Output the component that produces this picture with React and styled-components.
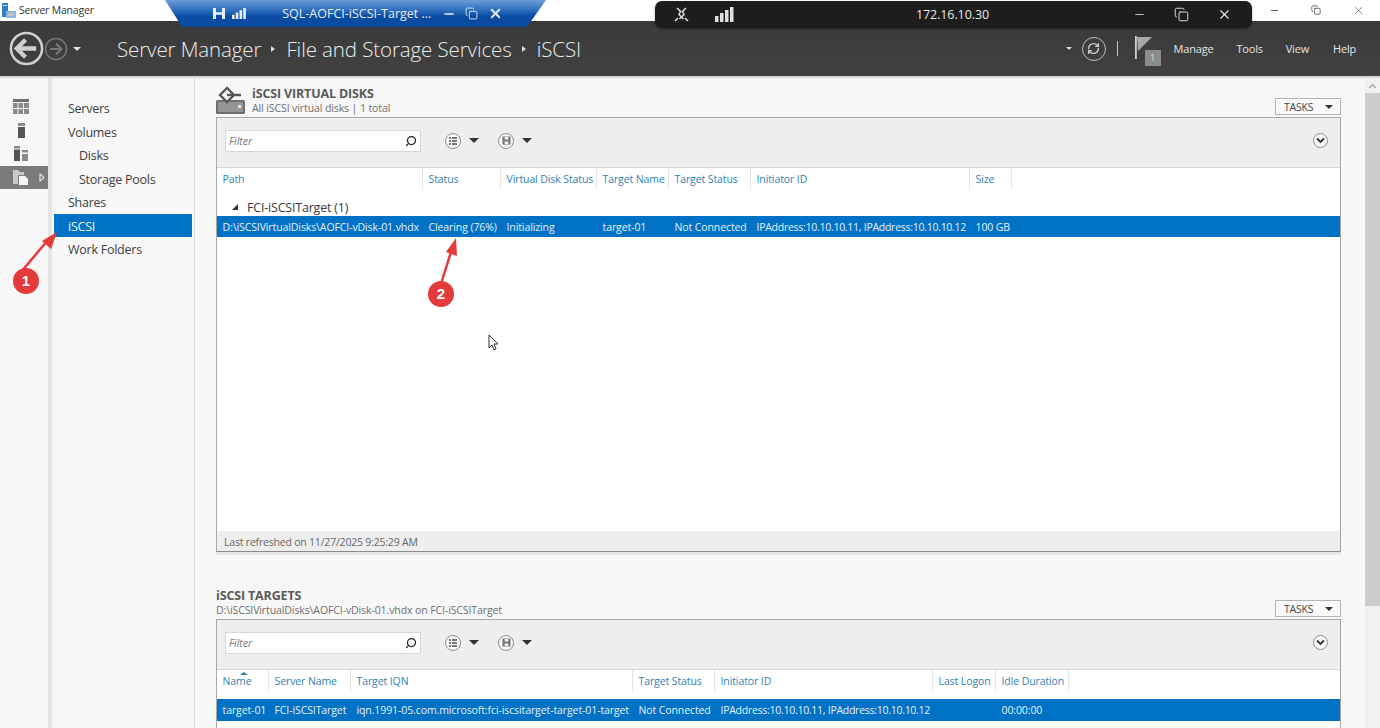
import React from 'react';
import styled, { createGlobalStyle } from 'styled-components';
import { Minus, X, Copy, Search, RefreshCw } from 'lucide-react';

const GlobalStyle = createGlobalStyle`
  html, body {
    margin: 0;
    padding: 0;
    height: 100%;
    overflow: hidden;
    background: #f7f7f7;
    font-family: "Open Sans", "Noto Sans", "Liberation Sans", sans-serif;
    color: #3a3a3a;
  }
  * { box-sizing: border-box; }
`;

const Page = styled.div`
  position: relative;
  width: 1380px;
  height: 728px;
  overflow: hidden;
  display: flex;
  flex-direction: column;
`;

const Spacer = styled.span`
  flex: none;
  width: ${p => p.$width}px;
`;

const TitleBar = styled.div`
  height: 21px;
  flex: none;
  background: #fff;
  display: flex;
  align-items: center;
  padding: 0 0 1px 2px;
  font-size: 10.5px;
  letter-spacing: -0.2px;
  color: #333;
`;

const TitleText = styled.span`
  margin-left: 3px;
  flex: 1;
`;

const WindowControls = styled.div`
  display: flex;
  align-items: center;
  gap: 31px;
  padding-right: 15px;
  color: #555;
`;

const Header = styled.header`
  height: 57px;
  flex: none;
  background: linear-gradient(#3a3a3a, #414141);
  border-bottom: 2px solid #d6d6d6;
  display: flex;
  align-items: center;
  color: #e6e6e6;
  padding-left: 9px;
`;

const NavButtons = styled.div`
  display: flex;
  align-items: center;
  width: 108px;
  flex: none;
`;

const Breadcrumb = styled.div`
  display: flex;
  align-items: center;
  flex: 1;
  font-size: 20.5px;
  font-weight: 300;
  letter-spacing: -0.1px;
  color: #ececec;
`;

const CrumbSep = styled.span`
  width: 0;
  height: 0;
  margin: 0 11px 0 10px;
  border-left: 4px solid #ddd;
  border-top: 3.5px solid transparent;
  border-bottom: 3.5px solid transparent;
`;

const HeaderRight = styled.div`
  display: flex;
  align-items: center;
  height: 100%;
`;

const Caret = styled.span`
  display: block;
  width: 0;
  height: 0;
  border-top: ${p => p.$size || 4}px solid ${p => p.$color || '#ddd'};
  border-left: ${p => p.$size || 4}px solid transparent;
  border-right: ${p => p.$size || 4}px solid transparent;
`;

const NavCaret = styled(Caret)`
  margin-left: 5px;
`;

const RefreshRing = styled.span`
  width: 24px;
  height: 24px;
  margin-left: 10px;
  border: 1.5px solid #bdbdbd;
  border-radius: 50%;
  display: flex;
  align-items: center;
  justify-content: center;
  color: #cfcfcf;
`;

const Divider = styled.span`
  width: 1px;
  height: 15px;
  margin: 0 17px 0 11px;
  background: #c8c8c8;
`;

const FlagBox = styled.div`
  position: relative;
  width: 26px;
  height: 30px;
  margin: 5px 13px 0 0;
`;

const FlagCount = styled.span`
  position: absolute;
  right: 0;
  bottom: 0;
  width: 16px;
  height: 16px;
  background: #8c8c8c;
  color: #ddd;
  font-size: 9px;
  text-align: center;
  line-height: 16px;
`;

const MenuItem = styled.span`
  font-size: 11px;
  letter-spacing: -0.2px;
  color: #e4e4e4;
  margin-right: ${p => p.$gap}px;
`;

const Body = styled.div`
  flex: 1;
  min-height: 0;
  display: flex;
`;

const Rail = styled.aside`
  width: 52px;
  flex: none;
  padding-top: 17px;
  background: #f7f7f7;
  border-right: 4px solid #e4e4e4;
`;

const RailItem = styled.div`
  height: 23.5px;
  display: flex;
  align-items: center;
  padding-left: 13px;
  background: ${p => (p.$active ? '#7b7b7b' : 'transparent')};
`;

const Nav = styled.nav`
  width: 143px;
  flex: none;
  padding: 18px 2px 0;
  background: #f7f7f7;
  border-right: 1px solid #dcdcdc;
`;

const NavItem = styled.div`
  height: 23.5px;
  line-height: 26px;
  font-size: 12.5px;
  letter-spacing: -0.25px;
  padding-left: ${p => (p.$sub ? 25 : 14)}px;
  background: ${p => (p.$active ? '#0072c6' : 'transparent')};
  color: ${p => (p.$active ? '#f2f8fc' : '#3f3f3f')};
`;

const Content = styled.main`
  flex: 1;
  min-width: 0;
  padding: 7px 24px 0 21px;
  background: #f7f7f7;
  overflow: hidden;
`;

const SectionHead = styled.div`
  height: 32px;
  display: flex;
  align-items: flex-start;
`;

const SectionIcon = styled.div`
  width: 36px;
  height: 32px;
  flex: none;
  padding-top: 1px;
`;

const SectionTitles = styled.div`
  flex: 1;
  min-width: 0;
`;

const SectionTitle = styled.div`
  font-size: 12.5px;
  font-weight: 700;
  line-height: 18px;
  letter-spacing: -0.15px;
  color: #5a5a5a;
`;

const SectionSub = styled.div`
  margin-top: -2px;
  font-size: 10.5px;
  line-height: 14px;
  letter-spacing: -0.1px;
  color: #6f6f6f;
`;

const TasksButton = styled.div`
  width: 66px;
  height: 17px;
  margin-top: 13px;
  flex: none;
  display: flex;
  align-items: center;
  justify-content: space-between;
  padding: 0 7px 0 8px;
  font-size: 10.5px;
  letter-spacing: -0.2px;
  color: #444;
  background: #f9f9f9;
  border: 1px solid #b4b4b4;
`;

const Panel = styled.section`
  height: ${p => p.$height}px;
  margin-bottom: ${p => p.$gap || 0}px;
  display: flex;
  flex-direction: column;
  background: #fff;
  border: 1px solid #a8a8a8;
  border-bottom-color: #8a8a8a;
  box-shadow: 0 3px 0 #e8e8e8;
`;

const Toolbar = styled.div`
  height: 50px;
  flex: none;
  display: flex;
  align-items: center;
  padding: 0 12px 4px 8px;
  background: #eeeeee;
  border-bottom: 1px solid #d8d8d8;
`;

const FilterBox = styled.div`
  width: 196px;
  height: 22px;
  display: flex;
  align-items: center;
  justify-content: space-between;
  padding: 0 3px;
  background: #fff;
  border: 1px solid #d6d6d6;
  font-size: 10.5px;
  font-style: italic;
  color: #777;
  margin-right: 24px;
`;

const FilterIcon = styled(Search)`
  transform: scaleX(-1);
`;

const ToolGroup = styled.div`
  display: flex;
  align-items: center;
  gap: 8px;
  margin-right: 19px;
`;

const RoundIcon = styled.span`
  width: 16px;
  height: 16px;
  border: 1px solid #8e8e8e;
  border-radius: 50%;
  background: #f8f8f8;
  display: flex;
  align-items: center;
  justify-content: center;
`;

const ExpandButton = styled(RoundIcon)`
  width: 15px;
  height: 15px;
  margin-left: auto;
`;

const Row = styled.div`
  display: grid;
  grid-template-columns: ${p => p.$columns};
  justify-content: start;
  height: ${p => p.$height}px;
  margin: ${p => p.$margin || '0'};
  align-items: center;
  font-size: 10.5px;
  letter-spacing: -0.1px;
  background: ${p => (p.$selected ? '#0072c6' : 'transparent')};
  color: ${p => (p.$selected ? '#e6f1f9' : '#2f7fb5')};
`;

const HeadCell = styled.div`
  position: relative;
  height: 100%;
  line-height: 22px;
  padding-left: 5.5px;
  white-space: nowrap;
  border-right: 1px solid #e6e6e6;
`;

const SortMark = styled.span`
  position: absolute;
  top: 2px;
  left: 23px;
  width: 0;
  height: 0;
  border-bottom: 3px solid #2f7fb5;
  border-left: 4px solid transparent;
  border-right: 4px solid transparent;
`;

const Cell = styled.div`
  padding-left: 5.5px;
  white-space: nowrap;
  letter-spacing: ${p => (p.$tight ? '-0.27px' : 'inherit')};
`;

const GroupRow = styled.div`
  height: 18px;
  margin-top: 8px;
  display: flex;
  align-items: center;
  padding-left: 15px;
  gap: 9px;
  font-size: 12.5px;
  letter-spacing: -0.2px;
  color: #3a3a3a;
`;

const GroupCaret = styled.span`
  width: 0;
  height: 0;
  border-bottom: 6px solid #333;
  border-left: 6px solid transparent;
`;

const Rows = styled.div`
  flex: 1;
  min-height: 0;
`;

const Footer = styled.div`
  height: 20px;
  flex: none;
  padding-left: 7px;
  line-height: 22px;
  font-size: 10.5px;
  letter-spacing: -0.2px;
  color: #666;
  background: #eeeeee;
`;

const Scrollbar = styled.div`
  width: 15px;
  flex: none;
  display: flex;
  flex-direction: column;
  background: #f1f1f1;
`;

const ScrollUp = styled.div`
  height: 15px;
  display: flex;
  align-items: center;
  justify-content: center;
  color: #a6a6a6;
`;

const ScrollThumb = styled.div`
  height: 513px;
  background: #cdcdcd;
`;

/* floating session bars, they sit over the title bar */
const BlueBar = styled.div`
  position: absolute;
  top: 0;
  left: 165px;
  width: 381px;
  height: 27px;
  display: flex;
  align-items: center;
  padding-left: 48px;
  clip-path: polygon(0 0, 100% 0, 95% 100%, 4.5% 100%);
  background: linear-gradient(#6c9bd8 0, #2a6bbb 40%, #0a4ca3 60%, #0b4a9e 100%);
  color: #e6eef8;
`;

const BlueTitle = styled.span`
  margin: 0 11px 0 36px;
  font-size: 12.5px;
  white-space: nowrap;
`;

const DarkBar = styled.div`
  position: absolute;
  top: 1px;
  left: 655px;
  width: 597px;
  height: 27px;
  display: flex;
  align-items: center;
  border-radius: 7px;
  background: #1d1d1d;
  color: #e8e8e8;
  box-shadow: 0 1px 2px rgba(0, 0, 0, 0.4);
`;

const DarkIp = styled.span`
  flex: 1;
  text-align: center;
  font-size: 12.5px;
  letter-spacing: -0.1px;
  padding-left: 38px;
`;

const DarkControls = styled.div`
  display: flex;
  align-items: center;
  gap: 28px;
  padding-right: 20px;
`;

const Annotation = styled.svg`
  position: absolute;
  top: 0;
  left: 0;
  width: 1380px;
  height: 728px;
  pointer-events: none;
`;

const Badge = styled.div`
  position: absolute;
  top: ${p => p.$y - 13}px;
  left: ${p => p.$x - 13}px;
  width: 26px;
  height: 26px;
  border-radius: 50%;
  background: #e53a3a;
  color: #fff;
  font-size: 15px;
  font-weight: 700;
  text-align: center;
  line-height: 26px;
  font-family: "Liberation Sans", sans-serif;
`;

const diskColumns = '206px 78px 96px 72px 82px 219px 42px';
const targetColumns = '52px 82px 282px 82px 218px 63px 73px';

const diskHead = ['Path', 'Status', 'Virtual Disk Status', 'Target Name', 'Target Status', 'Initiator ID', 'Size'];
const diskRow = [
  'D:\\iSCSIVirtualDisks\\AOFCI-vDisk-01.vhdx',
  'Clearing (76%)',
  'Initializing',
  'target-01',
  'Not Connected',
  'IPAddress:10.10.10.11, IPAddress:10.10.10.12',
  '100 GB',
];
const targetHead = ['Name', 'Server Name', 'Target IQN', 'Target Status', 'Initiator ID', 'Last Logon', 'Idle Duration'];
const targetRow = [
  'target-01',
  'FCI-iSCSITarget',
  'iqn.1991-05.com.microsoft:fci-iscsitarget-target-01-target',
  'Not Connected',
  'IPAddress:10.10.10.11, IPAddress:10.10.10.12',
  '',
  '00:00:00',
];

const BackIcon = ({ size, color, width = 2.6 }) => (
  <svg width={size} height={size} viewBox="0 0 36 36" fill="none" stroke={color} strokeWidth={width}>
    <circle cx="18" cy="18" r="16" />
    <path d="M28 18H9M17 9l-9 9 9 9" strokeWidth={width * 1.7} />
  </svg>
);

const ForwardIcon = () => (
  <svg width="24" height="24" viewBox="0 0 24 24" fill="none" stroke="#777" strokeWidth="1.5">
    <circle cx="12" cy="12" r="10.5" />
    <path d="M6 12h11M12 6.5l5.5 5.5-5.5 5.5" strokeWidth="2.2" />
  </svg>
);

const ServerLogo = () => (
  <svg width="14" height="17" viewBox="0 0 14 17">
    <rect x="0" y="1" width="6" height="14" fill="#2f7fc4" />
    <rect x="1" y="3" width="4" height="1" fill="#cfe3f5" />
    <rect x="4" y="9" width="10" height="7" fill="#8bb7dd" />
    <rect x="6" y="11" width="6" height="3" fill="#b9c4cc" />
  </svg>
);

const SignalIcon = ({ color, size = 1 }) => (
  <svg width={19 * size} height={15 * size} viewBox="0 0 19 15" fill={color}>
    <rect x="0" y="9" width="3.5" height="6" />
    <rect x="5" y="6" width="3.5" height="9" />
    <rect x="10" y="3" width="3.5" height="12" />
    <rect x="15" y="0" width="3.5" height="15" />
  </svg>
);

const PinIcon = ({ color }) => (
  <svg width="12" height="13" viewBox="0 0 12 13" fill="none" stroke={color}>
    <path d="M1.500 1v11M10.500 1v11" strokeWidth="3" />
    <path d="M2 6.500h8" strokeWidth="2.500" />
  </svg>
);

const StruckPin = () => (
  <svg width="17" height="17" viewBox="0 0 17 17" fill="none" stroke="#d8d8d8" strokeWidth="1.6">
    <path d="M4 2l3.500 3.500-1.500 3 4.500 4.500M13 2 9.500 5.500l1.500 3L6.500 13" />
    <path d="M2 15l3-3M15 15l-3-3" />
  </svg>
);

const FlagIcon = () => (
  <svg width="18" height="23" viewBox="0 0 18 23">
    <rect x="0" y="0" width="1.8" height="23" fill="#cfcfcf" />
    <path d="M2 1h15L3 15z" fill="#a8a8a8" />
  </svg>
);

const DashboardIcon = () => (
  <svg width="16" height="15" viewBox="0 0 16 15">
    <rect width="16" height="3" fill="#6f6f6f" />
    <path d="M0 4h4.500v5H0zM5.500 4H10v5H5.500zM11 4h5v5h-5zM0 10h4.500v5H0zM5.500 10H10v5H5.500zM11 10h5v5h-5z" fill="#8a8a8a" />
  </svg>
);

const ServerIcon = () => (
  <svg width="16" height="15" viewBox="0 0 16 15">
    <rect x="5" y="0" width="7" height="3" fill="#8a8a8a" />
    <rect x="5" y="4" width="7" height="11" fill="#555" />
  </svg>
);

const AllServersIcon = () => (
  <svg width="16" height="15" viewBox="0 0 16 15">
    <rect x="1" y="0" width="6" height="2.500" fill="#8a8a8a" />
    <rect x="1" y="3.500" width="6" height="11.500" fill="#555" />
    <rect x="9" y="4" width="6" height="2.500" fill="#8a8a8a" />
    <rect x="9" y="8" width="6" height="7" fill="#8a8a8a" />
  </svg>
);

const StorageIcon = () => (
  <svg width="16" height="16" viewBox="0 0 16 16">
    <path d="M0 1h5l1.500 2H11v3H5v9H0z" fill="#c9c9c9" />
    <path d="M6 7h6l3 3v6H6z" fill="#f5f5f5" />
  </svg>
);

const RailArrow = () => (
  <svg width="6" height="9" viewBox="0 0 6 9" fill="none" stroke="#dcdcdc" strokeWidth="1.200">
    <path d="M1 1l4 3.500L1 8z" />
  </svg>
);

const DiskSectionIcon = () => (
  <svg width="30" height="29" viewBox="0 0 30 29">
    <rect x="0" y="14" width="29" height="14" rx="1.500" fill="#6f6f6f" />
    <rect x="2" y="16" width="25" height="10" fill="#959595" />
    <rect x="22" y="19" width="3" height="3" fill="#e4e4e4" />
    <path d="M11 2 4 9l7 7 7-7z" fill="#f7f7f7" stroke="#555" strokeWidth="2.400" />
    <path d="M11 9h14" stroke="#555" strokeWidth="2.400" />
  </svg>
);

const ListIcon = () => (
  <svg width="10" height="10" viewBox="0 0 10 10" fill="#777">
    <path d="M1 1h2v2H1zM1 4h2v2H1zM1 7h2v2H1zM4 1h5v2H4zM4 4h5v2H4zM4 7h5v2H4z" />
  </svg>
);

const SaveIcon = () => (
  <svg width="9" height="9" viewBox="0 0 10 10" fill="#777">
    <path d="M0.500 0.500h9v9h-9zM3 1v3h4V1zM3 6v3h4V6z" fillRule="evenodd" />
  </svg>
);

const Chevron = () => (
  <svg width="9" height="7" viewBox="0 0 9 7" fill="none" stroke="#333" strokeWidth="1.800">
    <path d="M1 1.500l3.500 3.500L8 1.500" />
  </svg>
);

const TableToolbar = () => (
  <Toolbar>
    <FilterBox>
      Filter
      <FilterIcon size={12} color="#222" strokeWidth={2.5} />
    </FilterBox>
    <ToolGroup>
      <RoundIcon><ListIcon /></RoundIcon>
      <Caret $size={5.5} $color="#333" />
    </ToolGroup>
    <ToolGroup>
      <RoundIcon><SaveIcon /></RoundIcon>
      <Caret $size={5.5} $color="#333" />
    </ToolGroup>
    <ExpandButton><Chevron /></ExpandButton>
  </Toolbar>
);

const Tasks = () => (
  <TasksButton>
    TASKS
    <Caret $color="#333" />
  </TasksButton>
);

const App = () => (
  <Page>
    <GlobalStyle />
    <TitleBar>
      <ServerLogo />
      <TitleText>Server Manager</TitleText>
      <WindowControls>
        <Minus size={11} />
        <Copy size={10} />
        <X size={13} strokeWidth={1.2} />
      </WindowControls>
    </TitleBar>

    <Header>
      <NavButtons>
        <BackIcon size={35} color="#cfcfcf" />
        <ForwardIcon />
        <NavCaret />
      </NavButtons>
      <Breadcrumb>
        Server Manager<CrumbSep />File and Storage Services<CrumbSep />iSCSI
      </Breadcrumb>
      <HeaderRight>
        <Caret $size={3} />
        <RefreshRing><RefreshCw size={13} strokeWidth={2.5} /></RefreshRing>
        <Divider />
        <FlagBox>
          <FlagIcon />
          <FlagCount>1</FlagCount>
        </FlagBox>
        <MenuItem $gap={23}>Manage</MenuItem>
        <MenuItem $gap={23}>Tools</MenuItem>
        <MenuItem $gap={24}>View</MenuItem>
        <MenuItem $gap={24}>Help</MenuItem>
      </HeaderRight>
    </Header>

    <Body>
      <Rail>
        <RailItem><DashboardIcon /></RailItem>
        <RailItem><ServerIcon /></RailItem>
        <RailItem><AllServersIcon /></RailItem>
        <RailItem $active><StorageIcon /><Spacer $width={10} /><RailArrow /></RailItem>
      </Rail>
      <Nav>
        <NavItem>Servers</NavItem>
        <NavItem>Volumes</NavItem>
        <NavItem $sub>Disks</NavItem>
        <NavItem $sub>Storage Pools</NavItem>
        <NavItem>Shares</NavItem>
        <NavItem $active>iSCSI</NavItem>
        <NavItem>Work Folders</NavItem>
      </Nav>
      <Content>
        <SectionHead>
          <SectionIcon><DiskSectionIcon /></SectionIcon>
          <SectionTitles>
            <SectionTitle>iSCSI VIRTUAL DISKS</SectionTitle>
            <SectionSub>All iSCSI virtual disks | 1 total</SectionSub>
          </SectionTitles>
          <Tasks />
        </SectionHead>
        <Panel $height={435} $gap={35}>
          <TableToolbar />
          <Row $columns={diskColumns} $height={22}>
            {diskHead.map(h => <HeadCell key={h}>{h}</HeadCell>)}
          </Row>
          <Rows>
            <GroupRow><GroupCaret />FCI-iSCSITarget (1)</GroupRow>
            <Row $columns={diskColumns} $height={21} $selected>
              {diskRow.map(c => <Cell key={c} $tight={c.startsWith('IPAddress')}>{c}</Cell>)}
            </Row>
          </Rows>
          <Footer>Last refreshed on 11/27/2025 9:25:29 AM</Footer>
        </Panel>
        <SectionHead>
          <SectionTitles>
            <SectionTitle>iSCSI TARGETS</SectionTitle>
            <SectionSub>D:\iSCSIVirtualDisks\AOFCI-vDisk-01.vhdx on FCI-iSCSITarget</SectionSub>
          </SectionTitles>
          <Tasks />
        </SectionHead>
        <Panel $height={160}>
          <TableToolbar />
          <Row $columns={targetColumns} $height={22}>
            {targetHead.map(h => (
              <HeadCell key={h}>
                {h === 'Name' && <SortMark />}
                {h}
              </HeadCell>
            ))}
          </Row>
          <Row $columns={targetColumns} $height={22} $margin="7px 0 0" $selected>
            {targetRow.map((c, i) => <Cell key={i} $tight={c.startsWith('IPAddress')}>{c}</Cell>)}
          </Row>
        </Panel>
      </Content>
      <Scrollbar>
        <ScrollUp>
          <svg width="9" height="6" viewBox="0 0 9 6" fill="none" stroke="currentColor" strokeWidth="1.300">
            <path d="M1 5l3.500-3.500L8 5" />
          </svg>
        </ScrollUp>
        <ScrollThumb />
      </Scrollbar>
    </Body>

    <BlueBar>
      <PinIcon color="#e6eef8" />
      <Spacer $width={7} />
      <SignalIcon color="#e6eef8" size={0.75} />
      <BlueTitle>SQL-AOFCI-iSCSI-Target ...</BlueTitle>
      <Minus size={14} strokeWidth={2.5} />
      <Spacer $width={9} />
      <Copy size={13} strokeWidth={1.6} />
      <Spacer $width={10} />
      <X size={15} strokeWidth={3} />
    </BlueBar>

    <DarkBar>
      <Spacer $width={18} />
      <StruckPin />
      <Spacer $width={25} />
      <SignalIcon color="#e0e0e0" />
      <DarkIp>172.16.10.30</DarkIp>
      <DarkControls>
        <Minus size={13} strokeWidth={1.5} />
        <Copy size={15} strokeWidth={1.5} />
        <X size={15} strokeWidth={1.8} />
      </DarkControls>
    </DarkBar>

    <Annotation viewBox="0 0 1380 728">
      <path d="M21 272 48 240" stroke="#e53a3a" strokeWidth="2.500" fill="none" />
      <path d="M57 232 51 249 42 241z" fill="#e53a3a" />
      <path d="M441 284 451 252" stroke="#e53a3a" strokeWidth="2.500" fill="none" />
      <path d="M456 238 457 256 446 252z" fill="#e53a3a" />
      <path d="M489 335v13l3-3 2 5 2-1-2-5h4z" fill="#fff" stroke="#333" strokeWidth="1" />
    </Annotation>
    <Badge $x={26} $y={281}>1</Badge>
    <Badge $x={441} $y={294}>2</Badge>
  </Page>
);

export default App;
